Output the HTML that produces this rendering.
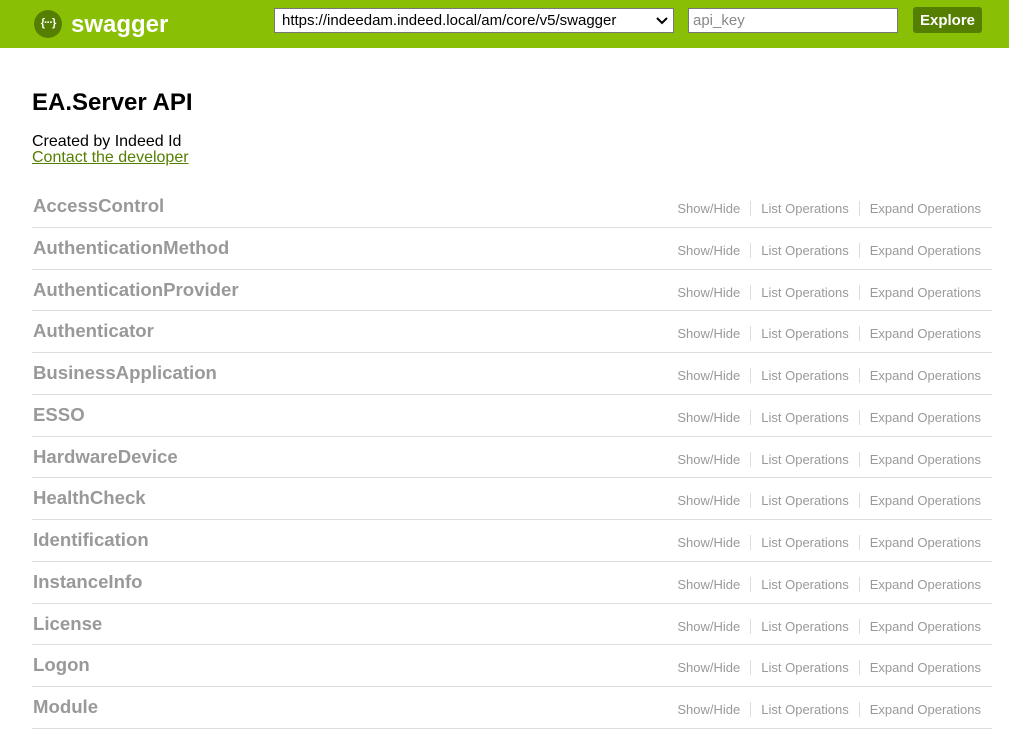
<!DOCTYPE html>
<html><head><meta charset="utf-8"><style>
*{box-sizing:border-box}
body{margin:0;font-family:"Liberation Sans",Arial,sans-serif;background:#fff;width:1009px;height:731px;overflow:hidden}
.hdr{height:48px;background:#89bf04;position:relative}
.logo{position:absolute;left:34px;top:10px;width:28px;height:28px;border-radius:50%;background:#547f00;color:#fff;font-size:11px;font-weight:bold;text-align:center;line-height:27px;letter-spacing:-1px}
.brand{position:absolute;left:71px;top:11px;color:#fff;font-weight:bold;font-size:24px}
.sel{position:absolute;left:274px;top:8px;width:400px;height:25px;border:1px solid #777;background:#fff;font-size:15px;padding:3px 7px;color:#000}
.sel svg{position:absolute;right:5px;top:8px}
.inp{position:absolute;left:688px;top:8px;width:210px;height:25px;border:1px solid #777;background:#fff;font-size:15px;padding:3px 4px;color:#888}
.btn{position:absolute;left:913px;top:7px;width:69px;height:26px;background:#547f00;border-radius:3px;color:#fff;font-weight:bold;font-size:15px;text-align:center;line-height:28px}
h1{position:absolute;left:32px;top:89px;margin:0;font-size:24px;font-weight:bold;color:#000}
.info{position:absolute;left:32px;top:134px;font-size:16px;line-height:16px;color:#000}
.info a{color:#547f00;text-decoration:underline}
.list{position:absolute;left:32px;top:186px;width:960px}
.row{height:41.75px;border-bottom:1px solid #ddd;position:relative}
.row .t{position:absolute;left:1px;top:9px;font-size:18.6px;font-weight:bold;color:#999}
.ops{position:absolute;right:11px;top:15px;font-size:13px;color:#999}
.ops span{padding:0 10px;border-left:1px solid #ddd}
.ops span:first-child{border:none}
.ops span:last-child{padding-right:0}
</style></head><body>
<div class="hdr">
<div class="logo">{···}</div>
<div class="brand">swagger</div>
<div class="sel">https://indeedam.indeed.local/am/core/v5/swagger<svg width="12" height="8" viewBox="0 0 12 8"><path d="M1 1l5 5 5-5" stroke="#000" stroke-width="2" fill="none"/></svg></div>
<div class="inp">api_key</div>
<div class="btn">Explore</div>
</div>
<h1>EA.Server API</h1>
<div class="info">Created by Indeed Id<br><a>Contact the developer</a></div>
<div class="list">
<div class="row"><div class="t">AccessControl</div><div class="ops"><span>Show/Hide</span><span>List Operations</span><span>Expand Operations</span></div></div>
<div class="row"><div class="t">AuthenticationMethod</div><div class="ops"><span>Show/Hide</span><span>List Operations</span><span>Expand Operations</span></div></div>
<div class="row"><div class="t">AuthenticationProvider</div><div class="ops"><span>Show/Hide</span><span>List Operations</span><span>Expand Operations</span></div></div>
<div class="row"><div class="t">Authenticator</div><div class="ops"><span>Show/Hide</span><span>List Operations</span><span>Expand Operations</span></div></div>
<div class="row"><div class="t">BusinessApplication</div><div class="ops"><span>Show/Hide</span><span>List Operations</span><span>Expand Operations</span></div></div>
<div class="row"><div class="t">ESSO</div><div class="ops"><span>Show/Hide</span><span>List Operations</span><span>Expand Operations</span></div></div>
<div class="row"><div class="t">HardwareDevice</div><div class="ops"><span>Show/Hide</span><span>List Operations</span><span>Expand Operations</span></div></div>
<div class="row"><div class="t">HealthCheck</div><div class="ops"><span>Show/Hide</span><span>List Operations</span><span>Expand Operations</span></div></div>
<div class="row"><div class="t">Identification</div><div class="ops"><span>Show/Hide</span><span>List Operations</span><span>Expand Operations</span></div></div>
<div class="row"><div class="t">InstanceInfo</div><div class="ops"><span>Show/Hide</span><span>List Operations</span><span>Expand Operations</span></div></div>
<div class="row"><div class="t">License</div><div class="ops"><span>Show/Hide</span><span>List Operations</span><span>Expand Operations</span></div></div>
<div class="row"><div class="t">Logon</div><div class="ops"><span>Show/Hide</span><span>List Operations</span><span>Expand Operations</span></div></div>
<div class="row"><div class="t">Module</div><div class="ops"><span>Show/Hide</span><span>List Operations</span><span>Expand Operations</span></div></div>
</div>
</body></html>
